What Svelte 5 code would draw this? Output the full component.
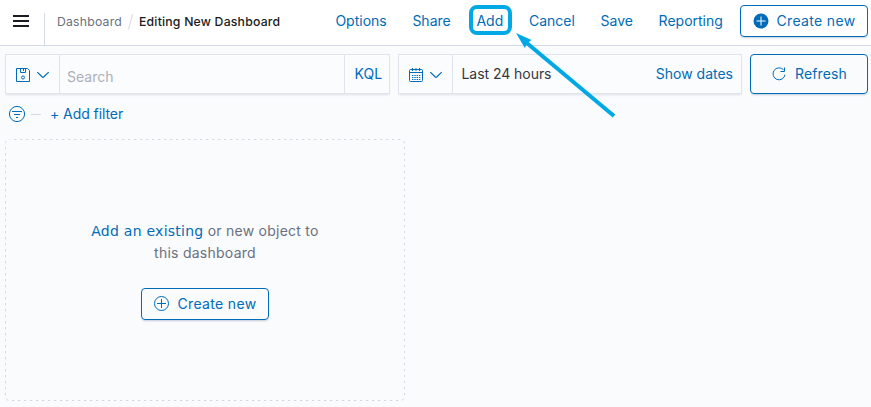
<script>
  const actions = ['Options', 'Share', 'Add', 'Cancel', 'Save', 'Reporting'];
</script>

<div class="app">
  <header>
    <button class="menu" aria-label="Menu"><i></i><i></i><i></i></button>
    <nav class="crumbs">
      <span class="parent">Dashboard</span>
      <span class="slash"></span>
      <span class="current">Editing New Dashboard</span>
    </nav>
    <div class="actions">
      {#each actions as action}
        <span class="action" class:marked={action === 'Add'}>{action}</span>
      {/each}
    </div>
    <button class="outlined create">
      <svg width="16" height="16" viewBox="0 0 16 16">
        <circle cx="8" cy="8" r="7.5" fill="#006bb8" />
        <path d="M3.5 8h9M8 3.5v9" stroke="#fff" fill="none" />
      </svg>
      <span>Create new</span>
    </button>
  </header>

  <div class="query">
    <div class="box search">
      <div class="prefix">
        <svg width="16" height="16" viewBox="0 0 16 16" fill="none" stroke="currentColor">
          <path d="M1.5 1.5h11l2 2v11h-13zM5.5 1.5v4h5v-4M8.5 2v2" />
          <circle cx="8" cy="10.5" r="1.5" />
        </svg>
        <svg class="chevron" width="14" height="8" viewBox="0 0 14 8" fill="none" stroke="currentColor" stroke-width="1.15">
          <path d="M1.3 1.2 6.3 6q.7.6 1.4 0l5-4.8" />
        </svg>
      </div>
      <span class="placeholder">Search</span>
      <span class="language">KQL</span>
    </div>
    <div class="box time">
      <div class="prefix">
        <svg width="16" height="16" viewBox="0 0 16 16" fill="none" stroke="currentColor">
          <rect x="1.5" y="2.5" width="13" height="12" rx="1" />
          <path d="M1.5 5.5h13M4.5 1v3M8 1v3M11.5 1v3" />
          <path d="M4 8.5h9M4 10.5h9M4 12.5h9" stroke-width="1.1" stroke-dasharray="1.4 .9" />
        </svg>
        <svg class="chevron" width="14" height="8" viewBox="0 0 14 8" fill="none" stroke="currentColor" stroke-width="1.15">
          <path d="M1.3 1.2 6.3 6q.7.6 1.4 0l5-4.8" />
        </svg>
      </div>
      <span class="range">Last 24 hours</span>
      <span class="dates">Show dates</span>
    </div>
    <button class="outlined refresh">
      <svg width="16" height="16" viewBox="0 0 16 16" fill="none" stroke="currentColor">
        <path d="M12.5 3.8A6 6 0 1 0 14 8.6M13.5 1.5v4h-4" />
      </svg>
      <span>Refresh</span>
    </button>
  </div>

  <div class="filters">
    <svg width="18" height="18" viewBox="0 0 18 18" fill="none" stroke="#006bb8">
      <circle cx="9" cy="9" r="7.6" />
      <path d="M4 6.5h10M6 9.5h6M8 12.5h2" />
    </svg>
    <i></i>
    <span>+ Add filter</span>
  </div>

  <section class="panel">
    <svg class="outline" width="400" height="262" viewBox="0 0 400 262" fill="none" stroke="#d3d8e6">
      <rect x=".5" y=".5" width="399" height="261" rx="4" stroke-dasharray="2.3 3.7" stroke-dashoffset="1.5" />
    </svg>
    <p><span class="existing">Add an existing</span> or new object to<br />this dashboard</p>
    <button class="outlined create">
      <svg width="16" height="16" viewBox="0 0 16 16" fill="none" stroke="currentColor">
        <circle cx="7.5" cy="7.5" r="7" />
        <path d="M3 7.5h9M7.5 3v9" />
      </svg>
      <span>Create new</span>
    </button>
  </section>

  <svg class="arrow" width="104" height="90" viewBox="0 0 104 90">
    <path d="M9 11.5 98 86" stroke="#00a9e5" stroke-width="4" fill="none" />
    <path d="M0 3 15.5 10 11.5 13 8.8 18z" fill="#00a9e5" />
  </svg>
</div>

<style>
  :global(body) {
    background: #fafbfd;
  }
  .app {
    position: relative;
    width: 871px;
    height: 407px;
    overflow: hidden;
    box-sizing: border-box;
    background: #fafbfd;
    font: 14px/20px Inter, 'Liberation Sans', sans-serif;
    color: #006bb8;
  }
  .app * {
    box-sizing: border-box;
  }
  button {
    font: inherit;
    color: inherit;
    padding: 0;
    border: 0;
    background: none;
  }
  span {
    white-space: nowrap;
  }
  svg {
    display: block;
    flex: none;
  }
  header {
    display: flex;
    height: 46px;
    border-bottom: 1px solid #d3dae6;
    background: #fff;
  }
  .menu {
    width: 45px;
    height: 32px;
    margin-top: 13px;
    padding: 2px 0 0 13px;
    border-right: 1px solid #d3dae6;
    display: flex;
    flex-direction: column;
    gap: 3px;
  }
  .menu i {
    width: 16px;
    height: 2px;
    background: #1a1c21;
  }
  .crumbs {
    display: flex;
    margin: 11px 0 0 12px;
    width: 278px;
    font-size: 12.25px;
    line-height: 21px;
    letter-spacing: 0.2px;
  }
  .parent {
    width: 65px;
    color: #6a717d;
  }
  .slash {
    width: 1px;
    height: 16px;
    margin: 3px 8px 0;
    background: #d3dae6;
    transform: rotate(15deg);
  }
  .current {
    color: #1a1c21;
    font-weight: 500;
  }
  .actions {
    display: flex;
    align-items: flex-start;
    gap: 25.7px;
    margin-top: 11px;
    padding-left: 0.4px;
    width: 405px;
  }
  .action {
    position: relative;
  }
  .marked::after {
    content: '';
    position: absolute;
    inset: -6px -9px -4px -7.5px;
    border: 4px solid #00a9e5;
    border-radius: 8px;
  }
  .outlined {
    display: flex;
    align-items: center;
    justify-content: center;
    border: 1px solid #006bb8;
    border-radius: 4px;
    box-shadow: 0 2px 2px -1px rgba(54, 97, 126, 0.3);
  }
  .create {
    width: 128px;
    height: 32px;
    gap: 8px;
    letter-spacing: 0.33px;
  }
  header .create {
    margin-top: 5px;
  }
  .query {
    display: flex;
    padding: 8px 3px 0 5px;
    gap: 8px;
  }
  .box {
    display: flex;
    height: 40px;
    border: 1px solid #e0e4ee;
    box-shadow: 0 2px 2px -1px rgba(152, 162, 179, 0.3);
    line-height: 38px;
    background: #fbfcfd;
  }
  .search {
    width: 385px;
  }
  .time {
    width: 344px;
  }
  .prefix {
    display: flex;
    align-items: center;
    width: 54px;
    padding: 2px 0 0 9px;
    gap: 5px;
    border-right: 1px solid #e0e4ee;
  }
  .placeholder {
    flex: 1;
    padding: 3px 0 0 7px;
    color: #abb0b9;
  }
  .language {
    width: 45px;
    padding-left: 9.5px;
    border-left: 1px solid #e0e4ee;
  }
  .range {
    flex: 1;
    padding-left: 8.5px;
    letter-spacing: -0.05px;
    color: #343741;
  }
  .dates {
    padding-right: 8px;
  }
  .refresh {
    width: 118px;
    height: 40px;
    gap: 8px;
    letter-spacing: 0.15px;
  }
  .filters {
    display: flex;
    align-items: center;
    height: 20px;
    margin: 10px 0 0 8px;
    letter-spacing: -0.07px;
  }
  .filters i {
    width: 10px;
    height: 1px;
    margin: 0 9px 0 5px;
    background: #d3dae6;
  }
  .panel {
    position: relative;
    width: 400px;
    height: 262px;
    margin: 15px 0 0 5px;
    display: flex;
    flex-direction: column;
    align-items: center;
  }
  .outline {
    position: absolute;
    inset: 0;
  }
  .panel p {
    margin: 81px 0 24px;
    line-height: 22px;
    text-align: center;
    letter-spacing: 0.25px;
    color: #6a717d;
  }
  .existing {
    color: #006bb8;
    font-family: 'DejaVu Sans', sans-serif;
  }
  .arrow {
    position: absolute;
    left: 516px;
    top: 30px;
  }
</style>
